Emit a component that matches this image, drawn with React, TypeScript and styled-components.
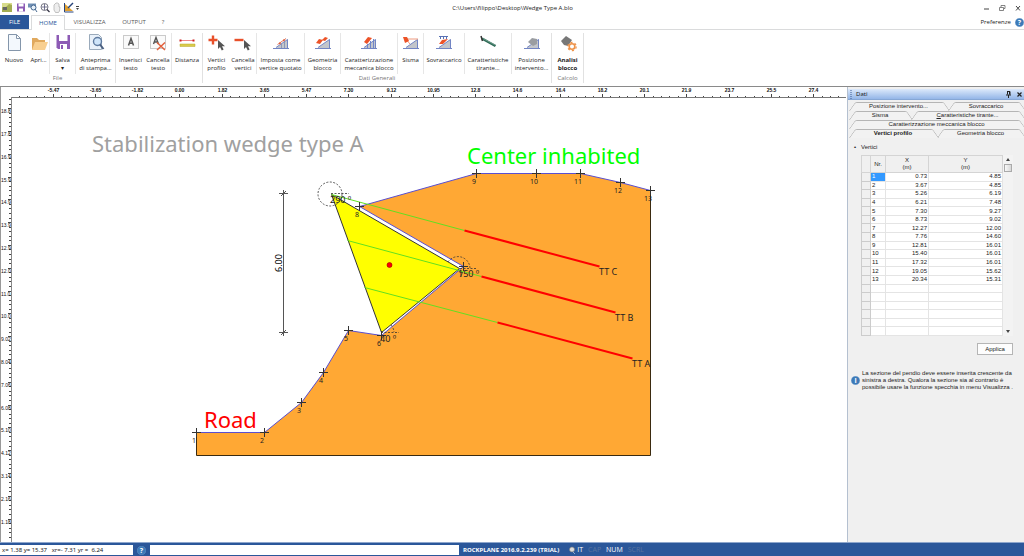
import React from 'react';
import styled, { createGlobalStyle, css } from 'styled-components';

const blue = '#2b579a';
const ui = '"Open Sans", "Noto Sans", sans-serif';
const tahoma = '"Noto Sans", "Open Sans", sans-serif';
const compact = '"Liberation Sans", Arial, sans-serif';

const GlobalStyle = createGlobalStyle`
  *, *::before, *::after { box-sizing: border-box; }
  body { margin: 0; background: #fff; color: #222; font: 6px/8px ${ui}; }
  button { font: inherit; color: inherit; border: 0; background: none; padding: 0; margin: 0; }
  a { color: inherit; text-decoration: none; }
  svg { display: block; }
`;

const Shell = styled.div`
  display: flex;
  flex-direction: column;
  min-height: 100vh;
`;

/* ---------- title bar ---------- */
const TitleBar = styled.header`
  display: grid;
  grid-template-columns: 1fr auto 1fr;
  align-items: center;
  height: 15px;
  padding: 0 1px 0 2px;
`;
const QuickBar = styled.div`
  display: flex;
  align-items: center;
  gap: 2px;
`;
const QuickButton = styled.button<{ $spaced?: boolean }>`
  width: 10px;
  height: 11px;
  margin-right: ${p => (p.$spaced ? 2 : 0)}px;
`;
const DocTitle = styled.h1`
  margin: 0;
  font: 400 6px/8px ${ui};
`;
const WindowButtons = styled.div`
  display: flex;
  justify-content: flex-end;
  gap: 6px;
`;
const WindowButton = styled.button`
  width: 10px;
  height: 10px;
`;

/* ---------- tabs ---------- */
const TabRow = styled.nav`
  display: flex;
  height: 15px;
  border-bottom: 1px solid #dadbdc;
`;
const FileTab = styled.button`
  width: 29px;
  margin-right: 2px;
  background: ${blue};
  color: #fff;
`;
const MenuTab = styled.button<{ $width: number; $active?: boolean }>`
  width: ${p => p.$width}px;
  color: #555;
  ${p =>
    p.$active &&
    css`
      height: 15px;
      background: #fff;
      border: 1px solid #dadbdc;
      border-bottom: 0;
      color: ${blue};
    `}
`;
const Preferences = styled.a`
  display: flex;
  align-items: center;
  gap: 4px;
  margin-left: auto;
  color: #222;
`;

/* ---------- ribbon ---------- */
const Ribbon = styled.div`
  display: flex;
  height: 57px;
  border-bottom: 1px solid #8a8a8a;
  padding-top: 3px;
`;
const Group = styled.section`
  display: flex;
  flex-direction: column;
  height: 50px;
  border-right: 1px solid #e1e1e1;
`;
const GroupItems = styled.div`
  display: flex;
  height: 41px;
`;
const GroupTitle = styled.h2`
  margin: 0;
  text-align: center;
  font: 400 6px/8px ${ui};
  color: #777;
`;
const Tool = styled.button<{ $width: number; $divided?: boolean; $bold?: boolean }>`
  display: flex;
  flex-direction: column;
  align-items: center;
  gap: 4px;
  width: ${p => p.$width}px;
  border-right: ${p => (p.$divided ? '1px solid #e6e6e6' : '0')};
  font-weight: ${p => (p.$bold ? 700 : 400)};
  white-space: pre;
`;

/* ---------- work area ---------- */
const WorkArea = styled.main`
  display: flex;
  flex: 1;
  min-height: 455px;
`;
const Canvas = styled.div`
  flex: 1;
  min-width: 0;
  border-left: 1px solid #999;
  display: flex;
`;
const Drawing = styled.svg`
  flex: 1;
  min-width: 0;
  font-family: ${tahoma};
`;

/* ---------- side panel ---------- */
const Panel = styled.aside`
  width: 177px;
  background: #f0f0f0;
  border-left: 1px solid #b4c0d0;
  font-family: ${compact};
  padding-top: 2px;
`;
const PanelHeader = styled.header`
  display: flex;
  align-items: center;
  height: 11px;
  padding: 0 1px 0 2px;
  gap: 4px;
  background: linear-gradient(#dce9fb, #94b6e8);
  border-bottom: 1px solid #86a7d6;
`;
const PanelTitle = styled.h2`
  margin: 0 auto 0 0;
  font: 400 6px/8px ${tahoma};
`;
const PanelButton = styled.button`
  width: 7px;
  height: 9px;
`;
const PanelTabs = styled.div`
  padding: 2px 0 0 1px;
`;
const PanelTabRow = styled.div<{ $columns: string }>`
  display: grid;
  grid-template-columns: ${p => p.$columns};
  height: 9px;
`;
const PanelTab = styled.button<{ $active?: boolean }>`
  position: relative;
  z-index: ${p => (p.$active ? 1 : 0)};
  font-weight: ${p => (p.$active ? 700 : 400)};
  &::before, &::after {
    content: '';
    position: absolute;
    z-index: -1;
    top: 0;
    bottom: 0;
    border-top: 1px solid #b5b5b5;
    background: #f2f2f2;
  }
  &::before {
    left: 3px;
    right: 50%;
    border-left: 1px solid #b5b5b5;
    border-top-left-radius: 2px;
    transform: skewX(-35deg);
  }
  &::after {
    left: 45%;
    right: 1px;
    border-right: 1px solid #b5b5b5;
    border-top-right-radius: 2px;
    transform: skewX(35deg);
  }
`;
const PanelTabLabel = styled.span`
  position: relative;
  z-index: 1;
  display: block;
  line-height: 9px;
`;
const VertexSection = styled.section`
  padding: 5px 11px 0 6px;
`;
const SectionTitle = styled.h3`
  display: flex;
  gap: 5px;
  margin: 0 0 4px;
  font: 400 6px/8px ${compact};
`;
const GridFrame = styled.div`
  display: flex;
  margin-left: 7px;
  height: 181px;
`;
const VertexTable = styled.table`
  flex: 1;
  height: 181px;
  border-collapse: collapse;
  table-layout: fixed;
  background: #fff;
  font: 6px/7px ${compact};
  th { font-weight: 400; padding: 0; }
  td { padding: 0 1px; text-align: right; border-right: 1px solid #e4e4e4; border-bottom: 1px solid #e4e4e4; }
`;
const HeadCell = styled.th`
  height: 17px;
  background: #f0f0f0;
  border: 1px solid #d4d4d4;
`;
const RowHandle = styled.th`
  background: #f0f0f0;
  border: 1px solid #ccc;
`;
const IndexCell = styled.td<{ $selected?: boolean }>`
  && {
    text-align: left;
    background: ${p => (p.$selected ? '#3399ff' : '#fff')};
    color: ${p => (p.$selected ? '#fff' : '#222')};
  }
`;
const ScrollBar = styled.div`
  display: flex;
  flex-direction: column;
  align-items: center;
  justify-content: space-between;
  width: 10px;
  padding: 3px 1px;
  background: #f3f3f3;
`;
const ScrollTop = styled.div`
  display: flex;
  flex-direction: column;
  align-items: center;
  gap: 3px;
`;
const ScrollThumb = styled.div`
  width: 8px;
  height: 8px;
  border: 1px solid #aaa;
  background: linear-gradient(90deg, #f8f8f8, #d8d8d8);
`;
const ApplyButton = styled.button`
  display: block;
  width: 36px;
  height: 12px;
  margin: 7px 0 0 auto;
  border: 1px solid #b5b5b5;
  background: #fdfdfd;
`;
const Note = styled.p`
  display: flex;
  align-items: center;
  gap: 2px;
  margin: 15px 0 0;
  padding-left: 3px;
  line-height: 7px;
  white-space: pre;
`;

/* ---------- status bar ---------- */
const StatusBar = styled.footer`
  display: flex;
  align-items: center;
  height: 14px;
  padding-top: 1px;
  border-top: 1px solid #8ea6cc;
  background: ${blue};
  color: #fff;
`;
const Coordinates = styled.output`
  width: 133px;
  height: 10px;
  padding: 1px 2px;
  background: #fff;
  color: #222;
  font-family: ${tahoma};
  white-space: pre;
`;
const StatusHelp = styled.button`
  width: 17px;
  display: flex;
  justify-content: center;
`;
const Message = styled.input`
  width: 309px;
  height: 10px;
  border: 0;
  padding: 0 2px;
  background: #fff;
  font: inherit;
`;
const Product = styled.strong`
  margin: 0 9px 0 4px;
`;
const Flags = styled.div`
  display: flex;
  gap: 5px;
  font-size: 7px;
`;
const Flag = styled.span<{ $off?: boolean }>`
  color: ${p => (p.$off ? '#58739f' : '#fff')};
`;

/* ---------- icons ---------- */
const Slope = ({ children }: { children?: React.ReactNode }) => (
  <>
    <path d="M4 15.500 17 6v9.500z" fill="#c3c6cb" />
    <path d="M2 15.500h16M5 14.500 16.500 6.500V15" fill="none" stroke="#7285c4" />
    {children}
  </>
);

const icons: Record<string, React.ReactNode> = {
  new: (
    <path d="M4.500 1.500h8l4 4v12h-12zM12.500 1.500v4h4" fill="#f3f8fd" stroke="#8496ab" />
  ),
  open: (
    <>
      <path d="M3 17V5h5l2 2h6v3" fill="#e0a95e" />
      <path d="m3 17 3-8h13l-3 8z" fill="#f8cf90" />
    </>
  ),
  save: (
    <>
      <path d="M3.500 2h13.500v14H5l-1.500-1.500z" fill="#8d5bb5" />
      <path d="M6 2h8.500v6H6z" fill="#fff" />
      <path d="M7 11h7v5H7z" fill="#fff" />
      <path d="M8 12h2v4H8z" fill="#8d5bb5" />
    </>
  ),
  preview: (
    <>
      <path d="M3.500 1.500h9l3 3v12h-12z" fill="#e9f1fa" stroke="#9aaabb" />
      <circle cx="11.500" cy="8.500" r="4" fill="#cfe5fa" stroke="#5f7ba0" strokeWidth="1.400" />
      <path d="m14 11.500 3.500 4.500" stroke="#4a5f80" strokeWidth="2" />
    </>
  ),
  text: (
    <>
      <rect x="2.500" y="2.500" width="15" height="13" fill="#fafafa" stroke="#999" strokeDasharray="1 1" />
      <path d="m7.500 12.500 2.500-7 2.500 7M8.300 10.300h3.500" fill="none" stroke="#555" strokeWidth="1.500" />
    </>
  ),
  textDelete: (
    <>
      <rect x="2.500" y="2.500" width="15" height="13" fill="#fafafa" stroke="#999" strokeDasharray="1 1" />
      <path d="m5.500 11 2.500-6.500 2.500 6.500M6.300 9h3.500" fill="none" stroke="#555" strokeWidth="1.400" />
      <path d="m9 9.500 8 7.500M17 9.500 9 17" stroke="#e2603c" strokeWidth="1.500" />
    </>
  ),
  distance: (
    <>
      <path d="M3 7.500h14" stroke="#e88" />
      <path d="M2.500 6.500h2v2h-2zM15.500 6.500h2v2h-2z" fill="#d02020" />
      <path d="M3 11h15v2.500H3z" fill="#d9cb4a" stroke="#b8a72c" strokeWidth=".5" />
    </>
  ),
  vertexAdd: (
    <>
      <path d="M1.500 7h9M6 2.500v9" stroke="#e8502a" strokeWidth="2.400" />
      <path d="M11 7v9l2-2 1.800 3.500 1.800-1L15 13.200h3z" fill="#555" />
    </>
  ),
  vertexDelete: (
    <>
      <path d="M1.500 7h9" stroke="#e8502a" strokeWidth="2.400" />
      <path d="M11 7v9l2-2 1.800 3.500 1.800-1L15 13.200h3z" fill="#555" />
    </>
  ),
  slope: (
    <Slope>
      <path d="M10.500 11v4M13.500 9v6" stroke="#8d98b8" />
      <path d="M6.500 11.500 15 5.500" stroke="#e0795f" />
      <path d="M8 9.500h1.800v1.800H8zM12 6.500h1.800v1.800H12z" fill="#e0603c" />
    </Slope>
  ),
  geometry: (
    <Slope>
      <path d="m3 10 3-4 4 1-3 4zM9 7l3-3 3 1-3 3z" fill="#ec5328" />
    </Slope>
  ),
  block: (
    <Slope>
      <path d="m5 9 4-5 4 1-5 6z" fill="#ec5328" />
      <path d="M8.500 11v4M11.500 8v7M14.500 6v9" stroke="#6f86cc" />
    </Slope>
  ),
  quake: (
    <Slope>
      <path d="M3 6h14M4 5l5 6" stroke="#ef9a7e" />
      <path d="m2 4 4 0 2 4-4 2z" fill="#ec5328" />
    </Slope>
  ),
  load: (
    <Slope>
      <path d="m5 11 3-4 6-1-5 5z" fill="#ec5328" />
      <path d="M6.500 3v3M9.500 3v3M12.500 3v3M5 3.500h9" stroke="#5a72b5" />
    </Slope>
  ),
  anchor: (
    <>
      <path d="M4 5.500 17.500 13" stroke="#2e6b57" strokeWidth="2.500" />
      <path d="m3 3 1.500 5" stroke="#333" strokeWidth="1.500" />
      <path d="M5 5.500 17 12" stroke="#8fb5a5" strokeWidth=".6" />
    </>
  ),
  position: (
    <Slope>
      <path d="m6 9 4-4 5 1v5l-4 2z" fill="#9a9da1" />
    </Slope>
  ),
  analysis: (
    <>
      <path d="m3 8 5-5 6 4-4 6-4-1z" fill="#777" />
      <circle cx="14" cy="13.500" r="2.800" fill="#fff" stroke="#ee9248" strokeWidth="1.600" />
      <circle cx="14" cy="13.500" r="4.200" fill="none" stroke="#ee9248" strokeWidth="1.200" strokeDasharray="2.200 2.200" />
    </>
  ),
};

const ToolIcon = ({ name }: { name: string }) => (
  <svg width="20" height="19" viewBox="0 0 20 19" aria-hidden="true">
    {icons[name]}
  </svg>
);

const HelpMark = ({ label = '?' }: { label?: string }) => (
  <svg width="9" height="9" viewBox="0 0 9 9" aria-hidden="true">
    <circle cx="4.500" cy="4.500" r="4.300" fill="#3d7ab8" stroke="#7fa9d3" strokeWidth=".4" />
    <text x="4.500" y="7" textAnchor="middle" fontFamily="Open Sans" fontWeight="700" fontSize="7" fill="#fff">
      {label}
    </text>
  </svg>
);

const quickIcons: [string, React.ReactNode][] = [
  ['Salva', <><path d="M1 1.500h8v8H1z" fill="#8d5bb5" /><path d="M2.500 1.500h5v3h-5zM3 6.500h4v3H3z" fill="#fff" /></>],
  ['Anteprima', <><path d="M0 1.500h8v4H0z" fill="#7090b5" /><circle cx="5.500" cy="5.500" r="2.500" fill="#e6f0fa" stroke="#44678f" /><path d="m7 7 2 3" stroke="#44678f" /></>],
  ['Zoom', <><circle cx="4.500" cy="5" r="3.500" fill="#fff" stroke="#556" strokeWidth=".8" /><path d="M1.500 5h6M4.500 2v6" stroke="#557" strokeWidth=".8" /><path d="m7 7.500 2.500 2.500" stroke="#334" strokeWidth="1.300" /></>],
  ['Pan', <path d="M2 5V3l1-1 1-1h1.500L7 2v3l1 0-.5 4-1 1.500h-3L2 8z" fill="#eee" stroke="#aaa" strokeWidth=".7" />],
  ['Misura', <><path d="M1 2v7h8z" fill="#e0a030" /><path d="M.5 1v9h9" fill="none" stroke="#27437a" /><path d="m4 6 5-5" stroke="#27437a" strokeWidth="1.500" /></>],
];

/* ---------- ribbon data ---------- */
type ToolDef = { icon: string; label: string; width: number; divided?: boolean; bold?: boolean };
const groups: { title: string; items: ToolDef[] }[] = [
  {
    title: 'File',
    items: [
      { icon: 'new', label: 'Nuovo', width: 28 },
      { icon: 'open', label: 'Apri...', width: 22, divided: true },
      { icon: 'save', label: 'Salva\n▾', width: 26, divided: true },
      { icon: 'preview', label: 'Anteprima\ndi stampa...', width: 39 },
    ],
  },
  {
    title: '',
    items: [
      { icon: 'text', label: 'Inserisci\ntesto', width: 29 },
      { icon: 'textDelete', label: 'Cancella\ntesto', width: 27, divided: true },
      { icon: 'distance', label: 'Distanza', width: 30 },
    ],
  },
  {
    title: 'Dati Generali',
    items: [
      { icon: 'vertexAdd', label: 'Vertici\nprofilo', width: 27 },
      { icon: 'vertexDelete', label: 'Cancella\nvertici', width: 27, divided: true },
      { icon: 'slope', label: 'Imposta come\nvertice quotato', width: 48, divided: true },
      { icon: 'geometry', label: 'Geometria\nblocco', width: 36, divided: true },
      { icon: 'block', label: 'Caratterizzazione\nmeccanica blocco', width: 57, divided: true },
      { icon: 'quake', label: 'Sisma', width: 26, divided: true },
      { icon: 'load', label: 'Sovraccarico', width: 41, divided: true },
      { icon: 'anchor', label: 'Caratteristiche\ntirante...', width: 47, divided: true },
      { icon: 'position', label: 'Posizione\nintervento...', width: 39 },
    ],
  },
  {
    title: 'Calcolo',
    items: [{ icon: 'analysis', label: 'Analisi\nblocco', width: 31, bold: true }],
  },
];

/* ---------- drawing data ---------- */
const vertices: [number, number][] = [
  [196, 432], [264, 432], [301, 402], [323, 372], [348, 330], [381, 335], [463, 266],
  [359, 206], [476, 173], [536, 173], [580, 173], [620, 182], [650, 190],
];
const anchors = [
  { name: 'TT C', head: [331, 194], bulb: [464, 230], end: [599, 266] },
  { name: 'TT B', head: [347, 240], bulb: [481, 276], end: [615, 312] },
  { name: 'TT A', head: [364, 287], bulb: [497, 322], end: [632, 358] },
];
const xLabels = ['-5.47', '-3.65', '-1.82', '0.00', '1.82', '3.65', '5.47', '7.30', '9.12', '10.95', '12.8', '14.6', '16.4', '18.2', '20.1', '21.9', '23.7', '25.5', '27.4'];
const yLabels = ['18.8', '17.8', '16.9', '15.9', '14.9', '13.9', '12.9', '12.0', '11.0', '10.0', '9.02', '8.04', '7.06', '6.08', '5.10', '4.12', '3.14', '2.16', '1.18', '0.20'];

const xTick = (i: number) => Math.round(18.8 + i * 8.45) + 0.5;
const yTick = (i: number) => Math.round(99 + i * 4.56) + 0.5;
const points = (list: number[][]) => list.map(([x, y]) => `${x + 0.5},${y + 0.5}`).join(' ');

const Rulers = () => (
  <g stroke="#444" fontFamily="Liberation Sans" fontSize="5" shapeRendering="crispEdges">
    <line x1="11" x2="100%" y1="97.500" y2="97.500" stroke="#777" />
    <line x1="11.500" x2="11.500" y1="97" y2="542" stroke="#888" />
    {Array.from({ length: 98 }, (_, i) => (
      <line key={i} x1={xTick(i)} x2={xTick(i)} y1={i % 5 === 4 ? 94 : 96} y2="97" />
    ))}
    {Array.from({ length: 97 }, (_, i) => (
      <line key={i} y1={yTick(i)} y2={yTick(i)} x1={i % 5 === 2 ? 8 : 9} x2="11" />
    ))}
    <g stroke="none" fill="#111" fontWeight="700">
      {xLabels.map((t, i) => (
        <text key={t} x={xTick(i * 5 + 4)} y="92" textAnchor="middle">{t}</text>
      ))}
      {yLabels.map((t, i) => (
        <text key={t} x="1" y={yTick(i * 5 + 2) + 4} fontWeight="400">{t}</text>
      ))}
    </g>
  </g>
);

const Section = () => {
  const outline = [...vertices, [650, 455], [196, 455]];
  return (
    <g>
      <polygon points={points(outline)} fill="#ffa834" />
      <polyline points={points([[650, 190], [650, 455], [196, 455], [196, 432]])} fill="none" stroke="#3a2a10" />
      <polyline points={points(vertices)} fill="none" stroke="#5a4fd0" />
      <polygon points={points([[331, 194], [459, 268], [381, 332]])} fill="#ffff00" stroke="#333" />
      {anchors.map(a => (
        <g key={a.name}>
          <polyline points={points([a.head, a.bulb])} stroke="#62e020" />
          <polyline points={points([a.bulb, a.end])} stroke="#ff0000" strokeWidth="2" />
          <text x={a.end[0]} y={a.end[1] + 9} fontSize="9" fill="#222">{a.name}</text>
        </g>
      ))}
      <circle cx="389.500" cy="265" r="2.500" fill="#f00" stroke="#900" strokeWidth=".6" />
      <g fill="none" stroke="#333" strokeWidth=".8" strokeDasharray="2 1.500">
        <circle cx="330" cy="194" r="12" />
        <path d="M331 193.500h18M448 262a12 12 0 0 1 22 6M460 268.500h16M391 325a12 12 0 0 1 3 7M381 332.500h18" />
      </g>
      {vertices.map(([x, y], i) => (
        <g key={i}>
          <path d={`M${x - 4} ${y + 0.5}h9M${x + 0.5} ${y - 4}v9`} stroke="#333" />
          <text x={x - 2} y={y + 11} textAnchor="middle" fontSize="7" fill="#222">{i + 1}</text>
        </g>
      ))}
      <g fontSize="9" fill="#222">
        <text x="330" y="203">290 º</text>
        <text x="458" y="277">150 º</text>
        <text x="380" y="342">40 º</text>
        <text transform="translate(282 272) rotate(-90)" fill="#000">6.00</text>
      </g>
      <path d="M283.500 190v146M279 193.500h9M279 332.500h9M281 196l5-5M281 335l5-5" stroke="#555" />
      <g fontSize="22">
        <text x="92" y="152" fill="#a0a0a0">Stabilization wedge type A</text>
        <text x="467" y="164" fill="#00ff00">Center inhabited</text>
        <text x="204" y="428" fill="#ff0000">Road</text>
      </g>
    </g>
  );
};

const rows = [
  ['0.73', '4.85'], ['3.67', '4.85'], ['5.26', '6.19'], ['6.21', '7.48'], ['7.30', '9.27'],
  ['8.73', '9.02'], ['12.27', '12.00'], ['7.76', '14.60'], ['12.81', '16.01'], ['15.40', '16.01'],
  ['17.32', '16.01'], ['19.05', '15.62'], ['20.34', '15.31'], ...Array.from({ length: 6 }, () => ['', '']),
];

const panelTabs: { columns: string; tabs: React.ReactNode[] }[] = [
  { columns: '99px 1fr', tabs: ['Posizione intervento...', 'Sovraccarico'] },
  { columns: '62px 1fr', tabs: ['Sisma', <><u>C</u>aratteristiche tirante...</>] },
  { columns: '1fr', tabs: ['Caratterizzazione meccanica blocco'] },
  { columns: '88px 1fr', tabs: ['Vertici profilo', 'Geometria blocco'] },
];

const DataPanel = () => (
  <Panel>
    <PanelHeader>
      <svg width="2" height="9" aria-hidden="true">
        <path d="M1 0v9" stroke="#3a5a94" strokeDasharray="1 1" />
      </svg>
      <PanelTitle>Dati</PanelTitle>
      <PanelButton aria-label="Blocca">
        <svg width="7" height="9"><path d="M2 1.500h3v3M2.500 1.500v3M4.500 1.500v3M1 5h5M3.500 5v3" fill="none" stroke="#222" /></svg>
      </PanelButton>
      <PanelButton aria-label="Chiudi">
        <svg width="7" height="9"><path d="m1.500 2.500 4 4M5.500 2.500l-4 4" stroke="#222" strokeWidth="1.200" /></svg>
      </PanelButton>
    </PanelHeader>
    <PanelTabs role="tablist">
      {panelTabs.map((row, r) => (
        <PanelTabRow key={r} $columns={row.columns}>
          {row.tabs.map((tab, i) => {
            const active = r === 3 && i === 0;
            return (
              <PanelTab key={i} role="tab" aria-selected={active} $active={active}>
                <PanelTabLabel>{tab}</PanelTabLabel>
              </PanelTab>
            );
          })}
        </PanelTabRow>
      ))}
    </PanelTabs>
    <VertexSection>
      <SectionTitle><b>•</b>Vertici</SectionTitle>
      <GridFrame>
        <VertexTable>
          <colgroup>
            <col style={{ width: 9 }} /><col style={{ width: 15 }} /><col style={{ width: 43 }} /><col />
          </colgroup>
          <thead>
            <tr>
              <HeadCell aria-label="Riga" />
              <HeadCell>Nr.</HeadCell>
              <HeadCell>X<br />(m)</HeadCell>
              <HeadCell>Y<br />(m)</HeadCell>
            </tr>
          </thead>
          <tbody>
            {rows.map(([x, y], i) => (
              <tr key={i}>
                <RowHandle />
                <IndexCell $selected={i === 0}>{x ? i + 1 : '\u00a0'}</IndexCell>
                <td>{x}</td>
                <td>{y}</td>
              </tr>
            ))}
          </tbody>
        </VertexTable>
        <ScrollBar>
          <ScrollTop>
            <svg width="4" height="3"><path d="M0 3 2 0l2 3z" fill="#444" /></svg>
            <ScrollThumb />
          </ScrollTop>
          <svg width="4" height="3"><path d="m0 0 2 3 2-3z" fill="#444" /></svg>
        </ScrollBar>
      </GridFrame>
      <ApplyButton>Applica</ApplyButton>
    </VertexSection>
    <Note>
      <HelpMark label="i" />
      {'La sezione del pendio deve essere inserita crescente da\nsinistra a destra. Qualora la sezione sia al contrario è\npossibile usare la funzione specchia in menu Visualizza .'}
    </Note>
  </Panel>
);

export default function App() {
  return (
    <Shell>
      <GlobalStyle />
      <TitleBar>
        <QuickBar>
          <QuickButton aria-label="Rockplane" $spaced>
            <svg width="10" height="11"><path d="M0 1h10v9H0z" fill="#d8dc8c" /><path d="M0 10V5l3 1 4-4 3 1v7z" fill="#a3ad52" /><path d="M1 5h4v3H1z" fill="#666" /></svg>
          </QuickButton>
          {quickIcons.map(([name, icon]) => (
            <QuickButton key={name} aria-label={name}>
              <svg width="10" height="11">{icon}</svg>
            </QuickButton>
          ))}
          <QuickButton aria-label="Personalizza">
            <svg width="10" height="11"><path d="M0 4.500h3" stroke="#444" /><path d="M0 6h3L1.500 8z" fill="#444" /></svg>
          </QuickButton>
        </QuickBar>
        <DocTitle>C:\Users\filippo\Desktop\Wedge Type A.blo</DocTitle>
        <WindowButtons>
          <WindowButton aria-label="Riduci">
            <svg width="10" height="10"><path d="M3 6h5" stroke="#444" /></svg>
          </WindowButton>
          <WindowButton aria-label="Ripristina">
            <svg width="10" height="10"><path d="M2.500 4.500h4v3h-4zM4 4V2.500h4v3H7" fill="none" stroke="#666" strokeWidth=".8" /></svg>
          </WindowButton>
          <WindowButton aria-label="Chiudi">
            <svg width="10" height="10"><path d="m3 3 4 4.500M7 3 3 7.500" stroke="#444" /></svg>
          </WindowButton>
        </WindowButtons>
      </TitleBar>
      <TabRow>
        <FileTab>FILE</FileTab>
        <MenuTab $width={34} $active>HOME</MenuTab>
        <MenuTab $width={49}>VISUALIZZA</MenuTab>
        <MenuTab $width={40}>OUTPUT</MenuTab>
        <MenuTab $width={18}>?</MenuTab>
        <Preferences href="#preferenze">Preferenze<HelpMark /></Preferences>
      </TabRow>
      <Ribbon>
        {groups.map(group => (
          <Group key={group.title}>
            <GroupItems>
              {group.items.map(tool => (
                <Tool key={tool.icon} $width={tool.width} $divided={tool.divided} $bold={tool.bold}>
                  <ToolIcon name={tool.icon} />
                  {tool.label}
                </Tool>
              ))}
            </GroupItems>
            <GroupTitle>{group.title}</GroupTitle>
          </Group>
        ))}
      </Ribbon>
      <WorkArea>
        <Canvas>
          <Drawing role="img" aria-label="Sezione del pendio">
            <g transform="translate(-1 -87)">
              <Rulers />
              <Section />
            </g>
          </Drawing>
        </Canvas>
        <DataPanel />
      </WorkArea>
      <StatusBar>
        <Coordinates>{'x= 1.38 y= 15.37   xr=- 7.31 yr =  6.24'}</Coordinates>
        <StatusHelp aria-label="Guida"><HelpMark /></StatusHelp>
        <Message aria-label="Messaggio" readOnly />
        <Product>ROCKPLANE 2016.9.2.239 (TRIAL)</Product>
        <svg width="9" height="9" aria-hidden="true">
          <circle cx="4" cy="3.500" r="2.500" fill="#ddd" stroke="#777" strokeWidth=".6" />
          <path d="m5 6 2 2" stroke="#8fa8cf" />
        </svg>
        <Flags>
          <Flag>IT</Flag>
          <Flag $off>CAP</Flag>
          <Flag>NUM</Flag>
          <Flag $off>SCRL</Flag>
        </Flags>
      </StatusBar>
    </Shell>
  );
}
